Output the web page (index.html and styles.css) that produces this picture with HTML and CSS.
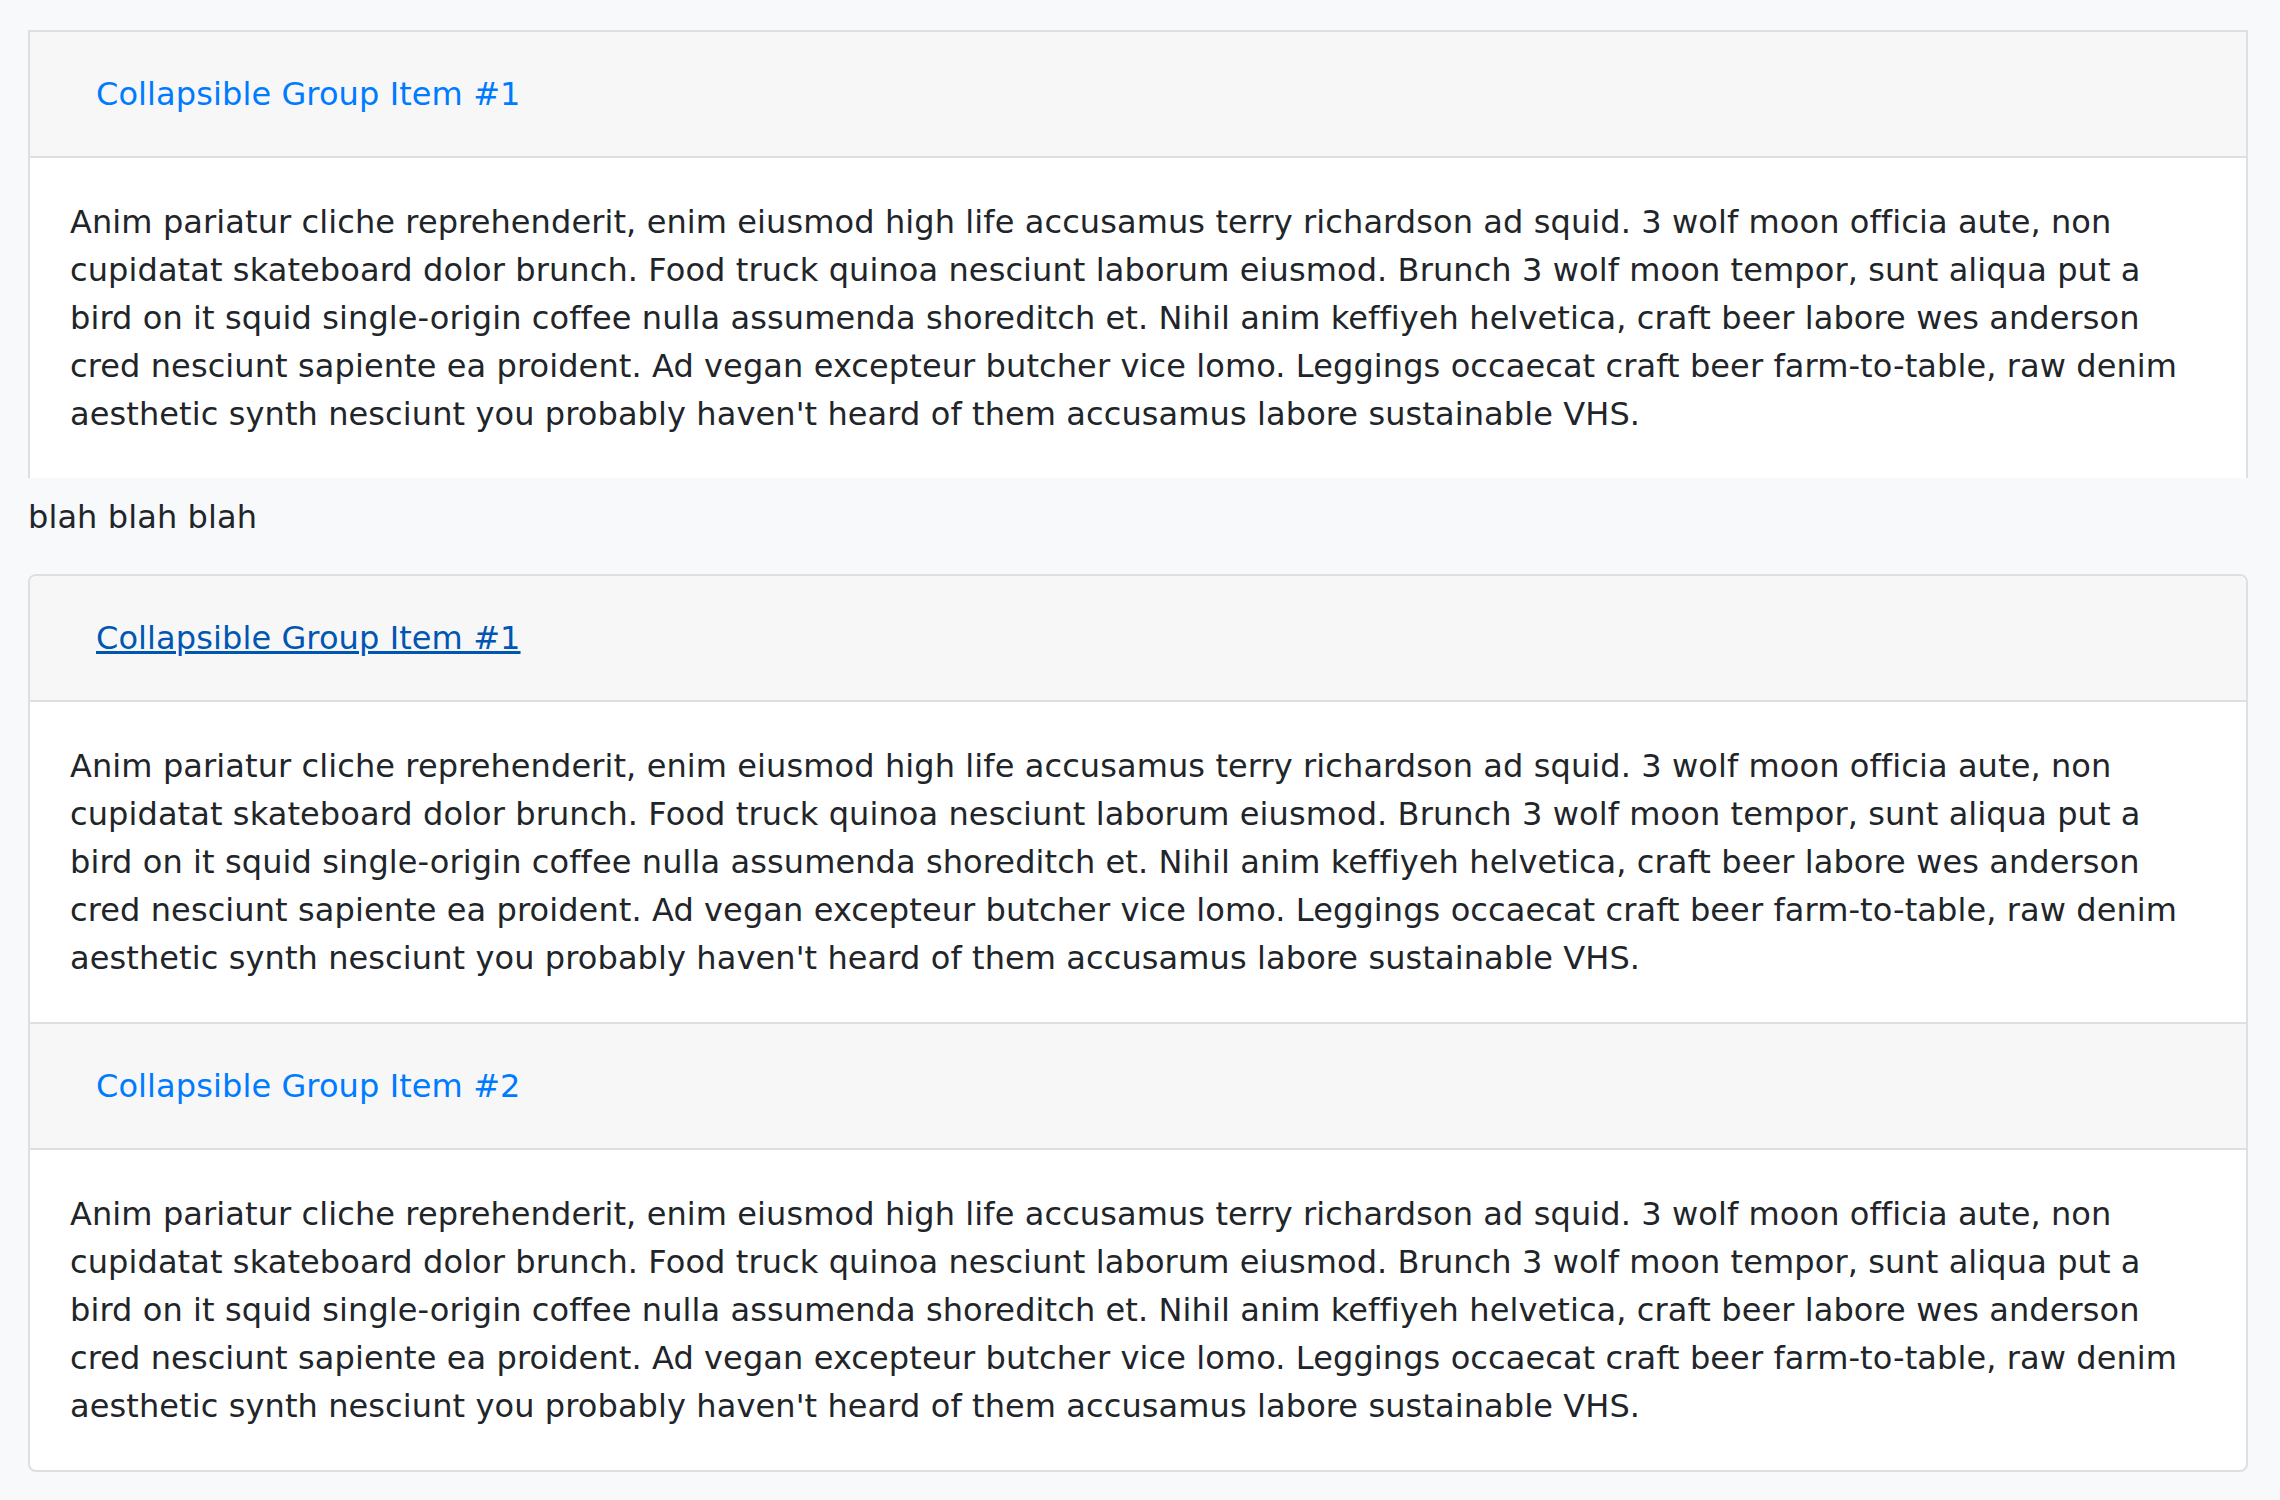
FILE: index.html
```html
<!DOCTYPE html>
<html lang="en">
<head>
<meta charset="utf-8">
<title>Accordion</title>
<link rel="stylesheet" href="styles.css">
</head>
<body>
<div class="page">
  <div class="card card-clipped">
    <div class="card-header">
      <h5 class="card-title"><a class="btn-link" href="#one">Collapsible Group Item #1</a></h5>
    </div>
    <div class="card-body">Anim pariatur cliche reprehenderit, enim eiusmod high life accusamus terry richardson ad squid. 3 wolf moon officia aute, non cupidatat skateboard dolor brunch. Food truck quinoa nesciunt laborum eiusmod. Brunch 3 wolf moon tempor, sunt aliqua put a bird on it squid single-origin coffee nulla assumenda shoreditch et. Nihil anim keffiyeh helvetica, craft beer labore wes anderson cred nesciunt sapiente ea proident. Ad vegan excepteur butcher vice lomo. Leggings occaecat craft beer farm-to-table, raw denim aesthetic synth nesciunt you probably haven't heard of them accusamus labore sustainable VHS.</div>
  </div>

  <p class="note">blah blah blah</p>

  <div class="card card-rounded">
    <div class="card-header">
      <h5 class="card-title"><a class="btn-link is-focused" href="#one">Collapsible Group Item #1</a></h5>
    </div>
    <div class="card-body">Anim pariatur cliche reprehenderit, enim eiusmod high life accusamus terry richardson ad squid. 3 wolf moon officia aute, non cupidatat skateboard dolor brunch. Food truck quinoa nesciunt laborum eiusmod. Brunch 3 wolf moon tempor, sunt aliqua put a bird on it squid single-origin coffee nulla assumenda shoreditch et. Nihil anim keffiyeh helvetica, craft beer labore wes anderson cred nesciunt sapiente ea proident. Ad vegan excepteur butcher vice lomo. Leggings occaecat craft beer farm-to-table, raw denim aesthetic synth nesciunt you probably haven't heard of them accusamus labore sustainable VHS.</div>
    <div class="card-header card-header-mid">
      <h5 class="card-title"><a class="btn-link" href="#two">Collapsible Group Item #2</a></h5>
    </div>
    <div class="card-body">Anim pariatur cliche reprehenderit, enim eiusmod high life accusamus terry richardson ad squid. 3 wolf moon officia aute, non cupidatat skateboard dolor brunch. Food truck quinoa nesciunt laborum eiusmod. Brunch 3 wolf moon tempor, sunt aliqua put a bird on it squid single-origin coffee nulla assumenda shoreditch et. Nihil anim keffiyeh helvetica, craft beer labore wes anderson cred nesciunt sapiente ea proident. Ad vegan excepteur butcher vice lomo. Leggings occaecat craft beer farm-to-table, raw denim aesthetic synth nesciunt you probably haven't heard of them accusamus labore sustainable VHS.</div>
  </div>
</div>
</body>
</html>
```

FILE: styles.css
```css
html, body {
  margin: 0;
  padding: 0;
  background: #f8f9fa;
}

body {
  font-family: "DejaVu Sans", sans-serif;
  font-size: 32px;
  line-height: 48px;
  letter-spacing: 0.1px;
  color: #212529;
}

.page {
  width: 2220px;
  padding: 30px 0 0 28px;
}

.card {
  background: #ffffff;
  border: 2px solid #dfdfdf;
}

.card-clipped {
  border-bottom: none;
  border-radius: 0;
}

.card-rounded {
  border-radius: 8px;
  overflow: hidden;
}

.card-header {
  background: #f7f7f7;
  padding: 24px 40px;
  border-bottom: 2px solid #dfdfdf;
}

.card-header-mid {
  border-top: 2px solid #dfdfdf;
}

.card-title {
  margin: 0;
  font-size: 32px;
  font-weight: normal;
  line-height: 48px;
}

.btn-link {
  display: inline-block;
  padding: 12px 24px;
  border: 2px solid transparent;
  color: #007bff;
  text-decoration: none;
}

.btn-link.is-focused {
  color: #0056b3;
  text-decoration: underline;
}

.card-body {
  padding: 40px;
}

.note {
  margin: 15px 0 33px 0;
}
```
